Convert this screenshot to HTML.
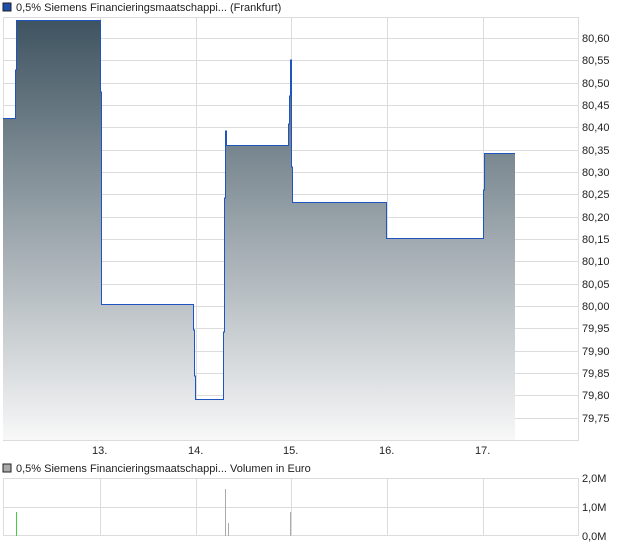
<!DOCTYPE html>
<html><head><meta charset="utf-8"><style>
body{margin:0;background:#fff;font-family:"Liberation Sans",sans-serif;}
svg text{font-family:"Liberation Sans",sans-serif;font-size:11px;fill:#222}
</style></head><body>
<svg width="620" height="546" xmlns="http://www.w3.org/2000/svg">
<defs><linearGradient id="g" x1="0" y1="17" x2="0" y2="440" gradientUnits="userSpaceOnUse">
<stop offset="0" stop-color="#3d525f"/><stop offset="1" stop-color="#f8f8f8"/></linearGradient></defs>
<rect x="3" y="3" width="8" height="8" fill="#1f4fa8" stroke="#222" stroke-width="1"/>
<text x="16" y="11">0,5% Siemens Financieringsmaatschappi... (Frankfurt)</text>
<g stroke="#dcdcdc" stroke-width="1">
<line x1="3" y1="38.5" x2="578" y2="38.5"/><line x1="3" y1="60.5" x2="578" y2="60.5"/><line x1="3" y1="83.5" x2="578" y2="83.5"/><line x1="3" y1="105.5" x2="578" y2="105.5"/><line x1="3" y1="127.5" x2="578" y2="127.5"/><line x1="3" y1="150.5" x2="578" y2="150.5"/><line x1="3" y1="172.5" x2="578" y2="172.5"/><line x1="3" y1="194.5" x2="578" y2="194.5"/><line x1="3" y1="217.5" x2="578" y2="217.5"/><line x1="3" y1="239.5" x2="578" y2="239.5"/><line x1="3" y1="261.5" x2="578" y2="261.5"/><line x1="3" y1="284.5" x2="578" y2="284.5"/><line x1="3" y1="306.5" x2="578" y2="306.5"/><line x1="3" y1="328.5" x2="578" y2="328.5"/><line x1="3" y1="351.5" x2="578" y2="351.5"/><line x1="3" y1="373.5" x2="578" y2="373.5"/><line x1="3" y1="395.5" x2="578" y2="395.5"/><line x1="3" y1="418.5" x2="578" y2="418.5"/>
<line x1="100.5" y1="17" x2="100.5" y2="440"/><line x1="196.5" y1="17" x2="196.5" y2="440"/><line x1="291.5" y1="17" x2="291.5" y2="440"/><line x1="387.5" y1="17" x2="387.5" y2="440"/><line x1="483.5" y1="17" x2="483.5" y2="440"/>
<rect x="3.5" y="17.5" width="575" height="423" fill="none"/>
</g>
<path d="M3,118 H15 V70 H16 V20 H100 V92 H101 V304 H193 V330 H194 V376 H195 V399 H223 V332 H224 V198 H225 V131 H226 V145 H288 V124 H289 V96 H290 V60 H291 V167 H292 V202 H386 V238 H483 V190 H484 V153 H515 V440 H3 Z" fill="url(#g)"/>
<path d="M3,118.5 H15.5 V70 H16.5 V20.5 H100.5 V92 H101.5 V304.5 H193.5 V330 H194.5 V376 H195.5 V399.5 H223.5 V332 H224.5 V198 H225.5 V131 H226.5 V145.5 H288.5 V124 H289.5 V96 H290.5 V60 H291.5 V167 H292.5 V202.5 H386.5 V238.5 H483.5 V190 H484.5 V153.5 H515" fill="none" stroke="#1f55c0" stroke-width="1"/>
<g>
<text x="582" y="42">80,60</text><text x="582" y="64">80,55</text><text x="582" y="87">80,50</text><text x="582" y="109">80,45</text><text x="582" y="131">80,40</text><text x="582" y="154">80,35</text><text x="582" y="176">80,30</text><text x="582" y="198">80,25</text><text x="582" y="221">80,20</text><text x="582" y="243">80,15</text><text x="582" y="265">80,10</text><text x="582" y="288">80,05</text><text x="582" y="310">80,00</text><text x="582" y="332">79,95</text><text x="582" y="355">79,90</text><text x="582" y="377">79,85</text><text x="582" y="399">79,80</text><text x="582" y="422">79,75</text>
<text x="92" y="454">13.</text><text x="188" y="454">14.</text><text x="283" y="454">15.</text><text x="379" y="454">16.</text><text x="475" y="454">17.</text>
</g>
<rect x="3" y="464" width="8" height="8" fill="#aaa" stroke="#222" stroke-width="1"/>
<text x="16" y="472">0,5% Siemens Financieringsmaatschappi... Volumen in Euro</text>
<g stroke="#dcdcdc" stroke-width="1">
<rect x="3.5" y="478.5" width="575" height="57" fill="none"/>
<line x1="3" y1="507.5" x2="578" y2="507.5"/>
<line x1="100.5" y1="478" x2="100.5" y2="536"/><line x1="196.5" y1="478" x2="196.5" y2="536"/><line x1="291.5" y1="478" x2="291.5" y2="536"/><line x1="387.5" y1="478" x2="387.5" y2="536"/><line x1="483.5" y1="478" x2="483.5" y2="536"/>
</g>
<line x1="16.5" y1="512" x2="16.5" y2="536" stroke="#4c4" stroke-width="1"/>
<line x1="225.5" y1="489" x2="225.5" y2="536" stroke="#aaa" stroke-width="1"/>
<line x1="228.5" y1="523" x2="228.5" y2="536" stroke="#aaa" stroke-width="1"/>
<line x1="290.5" y1="512" x2="290.5" y2="536" stroke="#aaa" stroke-width="1"/>
<text x="582" y="482">2,0M</text><text x="582" y="511">1,0M</text><text x="582" y="540">0,0M</text>
</svg>
</body></html>
